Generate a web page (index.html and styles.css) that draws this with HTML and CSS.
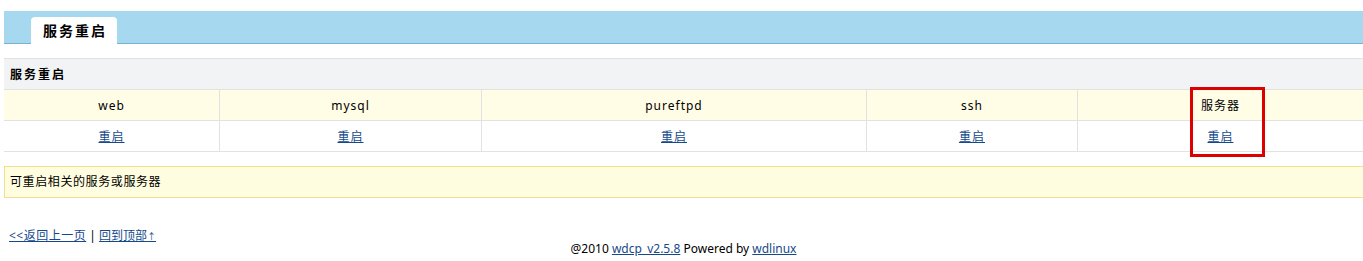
FILE: index.html
```html
<!DOCTYPE html>
<html>
<head>
  <meta http-equiv="content-type" content="text/html; charset=UTF-8">
  <link rel="stylesheet" href="styles.css">
  <title>服务重启</title>
</head>
<body>
<div class="page">

  <div class="topbar">
    <div class="tab">服务重启</div>
  </div>

  <table class="list">
    <tr class="title">
      <td colspan="5">服务重启</td>
    </tr>
    <tr class="names">
      <td class="c1">web</td>
      <td class="c2">mysql</td>
      <td class="c3">pureftpd</td>
      <td class="c4">ssh</td>
      <td class="c5">服务器</td>
    </tr>
    <tr class="acts">
      <td><a href="#">重启</a></td>
      <td><a href="#">重启</a></td>
      <td><a href="#">重启</a></td>
      <td><a href="#">重启</a></td>
      <td><a href="#">重启</a></td>
    </tr>
  </table>

  <div class="note">可重启相关的服务或服务器</div>

  <div class="back"><a href="#" class="prev">&lt;&lt;返回上一页</a> | <a href="#">回到顶部<span class="up">↑</span></a></div>

  <div class="foot">@2010 <a href="#">wdcp_v2.5.8</a> Powered by <a href="#">wdlinux</a></div>

  <div class="mark"></div>
</div>
</body>
</html>
```

FILE: styles.css
```css
body {
  margin: 0;
  font-family: "Noto Sans", "Noto Sans CJK SC", sans-serif;
  font-size: 12px;
  color: #000;
  background: #fff;
}

a {
  color: #16498a;
}

.page {
  position: relative;
  padding: 11px 0 0 4px;
}

.topbar {
  background: #a6d8ef;
  border-bottom: 1px solid #78b2d2;
  height: 32px;
  display: flex;
  align-items: flex-end;
  padding-left: 27px;
}
.tab {
  background: #fff;
  border-radius: 4px 4px 0 0;
  height: 27px;
  line-height: 27px;
  margin-bottom: -1px;
  padding: 0 10px 0 12px;
  font-size: 14px;
  font-weight: bold;
  letter-spacing: 2px;
}

.list {
  margin-top: 14px;
  width: 100%;
  border-collapse: collapse;
  border-top: 1px solid #e2e2e2;
}
.list td {
  border-bottom: 1px solid #e2e2e2;
  height: 30px;
  padding: 0;
  text-align: center;
  letter-spacing: 1px;
}
.list .names td,
.list .acts td {
  border-right: 1px solid #e2e2e2;
}
.list .names td:last-child,
.list .acts td:last-child {
  border-right: none;
}
.title td {
  background: #f2f3f5;
  text-align: left;
  padding-left: 6px;
  font-weight: bold;
  letter-spacing: 2px;
}
.names td {
  background: #fffde6;
}
.c1 { width: 215px; }
.c2 { width: 261px; }
.c3 { width: 384px; }
.c4 { width: 210px; }

.note {
  margin-top: 14px;
  background: #fffddf;
  border: 1px solid #f0e08e;
  border-right: none;
  height: 30px;
  line-height: 30px;
  padding-left: 5px;
  letter-spacing: 0.6px;
}

.back {
  margin-top: 30px;
  padding-left: 5px;
  line-height: 16px;
}
.back .prev {
  letter-spacing: 0.5px;
}
.back .up {
  font-size: 9px;
}
.foot {
  text-align: center;
  line-height: 16px;
  margin-top: -4px;
}

.mark {
  position: absolute;
  left: 1190px;
  top: 87px;
  width: 69px;
  height: 64px;
  border: 3px solid #dd0000;
}
```
